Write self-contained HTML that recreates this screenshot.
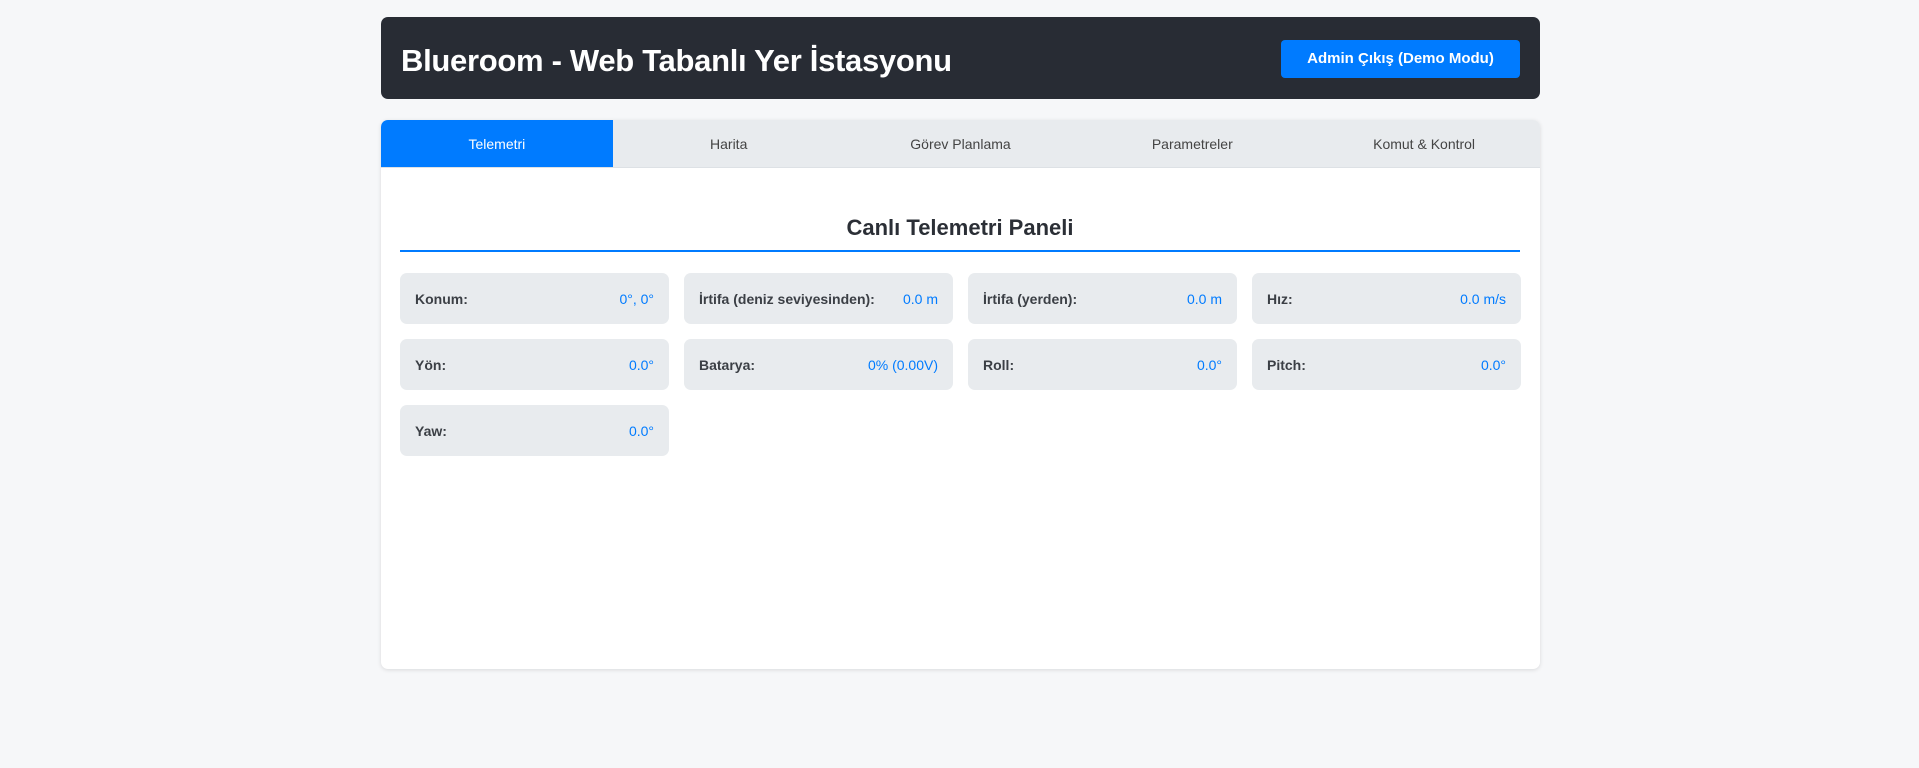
<!DOCTYPE html>
<html><head><meta charset="utf-8"><style>
*{box-sizing:border-box;margin:0;padding:0}
body{width:1919px;height:768px;background:#f6f7f9;font-family:"Liberation Sans",Arial,sans-serif;position:relative;overflow:hidden}
.hdr{position:absolute;left:381px;top:17px;width:1159px;height:82px;background:#282c34;border-radius:7px}
.hdr h1{position:absolute;left:20px;top:26px;color:#fff;font-size:31px;font-weight:bold;letter-spacing:-0.3px}
.btn{position:absolute;left:900px;top:23px;width:239px;height:38px;background:#007bff;border-radius:4px;color:#fff;font-weight:bold;font-size:15px;text-align:center;line-height:38px}
.card{position:absolute;left:381px;top:120px;width:1159px;height:549px;background:#fff;border-radius:7px;box-shadow:0 1px 4px rgba(0,0,0,.12);overflow:hidden}
.tabs{display:flex;height:48px;background:#e8ebee;border-bottom:1px solid #dde1e5}
.tabs div{flex:1;text-align:center;line-height:48px;font-size:14px;color:#444}
.tabs .a{background:#007bff;color:#fff}
h2{position:absolute;left:19px;top:95px;width:1120px;text-align:center;font-size:22px;font-weight:bold;color:#2b2f36;padding-bottom:8px;border-bottom:2px solid #007bff;height:37px}
.it{position:absolute;width:269px;height:51px;background:#e8ebee;border-radius:7px;display:flex;justify-content:space-between;align-items:center;padding:0 15px;font-size:14px}
.it b{color:#3b3f45}.it span{color:#007bff}
</style></head><body>
<div class="hdr"><h1>Blueroom - Web Tabanlı Yer İstasyonu</h1><div class="btn">Admin Çıkış (Demo Modu)</div></div>
<div class="card">
<div class="tabs"><div class="a">Telemetri</div><div>Harita</div><div>Görev Planlama</div><div>Parametreler</div><div>Komut &amp; Kontrol</div></div>
<h2>Canlı Telemetri Paneli</h2>
<div class="it" style="left:19px;top:153px"><b>Konum:</b><span>0°, 0°</span></div>
<div class="it" style="left:303px;top:153px"><b>İrtifa (deniz seviyesinden):</b><span>0.0 m</span></div>
<div class="it" style="left:587px;top:153px"><b>İrtifa (yerden):</b><span>0.0 m</span></div>
<div class="it" style="left:871px;top:153px"><b>Hız:</b><span>0.0 m/s</span></div>
<div class="it" style="left:19px;top:219px"><b>Yön:</b><span>0.0°</span></div>
<div class="it" style="left:303px;top:219px"><b>Batarya:</b><span>0% (0.00V)</span></div>
<div class="it" style="left:587px;top:219px"><b>Roll:</b><span>0.0°</span></div>
<div class="it" style="left:871px;top:219px"><b>Pitch:</b><span>0.0°</span></div>
<div class="it" style="left:19px;top:285px"><b>Yaw:</b><span>0.0°</span></div>
</div>
</body></html>
